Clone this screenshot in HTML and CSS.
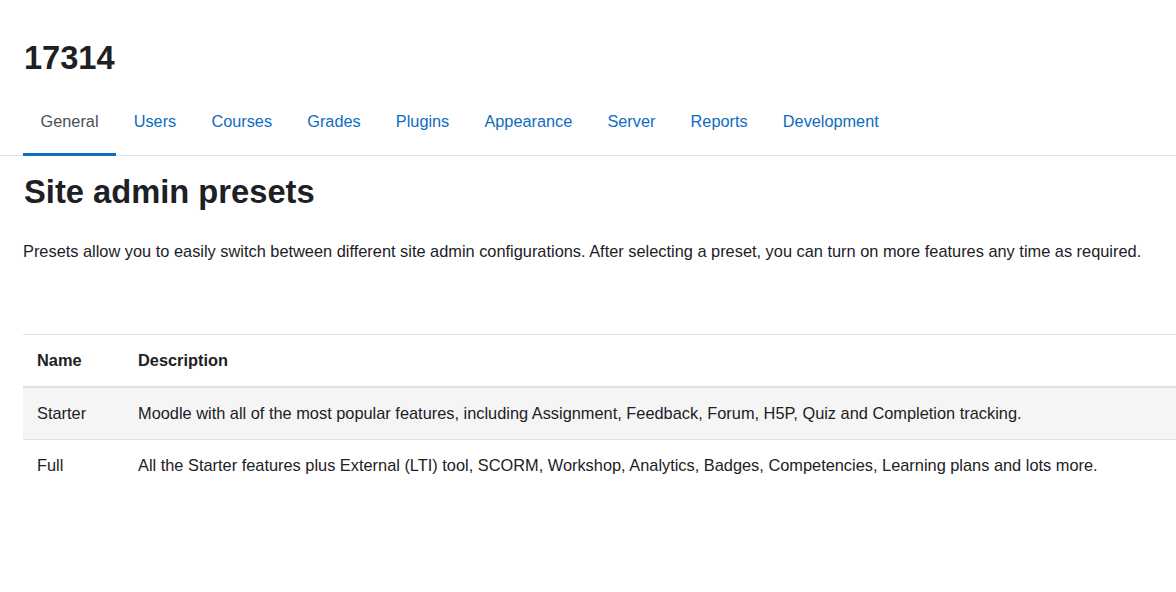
FILE: index.html
```html
<!DOCTYPE html>
<html lang="en">
<head>
    <meta charset="UTF-8">
    <meta name="viewport" content="width=device-width, initial-scale=1.0">
    <title>Site admin presets</title>
    <link rel="stylesheet" href="styles.css">
</head>
<body>
    <div class="page-header">
        <h1 class="site-title">17314</h1>
    </div>
    <nav class="tabs">
        <a class="tab active" href="#">General</a>
        <a class="tab" href="#">Users</a>
        <a class="tab" href="#">Courses</a>
        <a class="tab" href="#">Grades</a>
        <a class="tab" href="#">Plugins</a>
        <a class="tab" href="#">Appearance</a>
        <a class="tab" href="#">Server</a>
        <a class="tab" href="#">Reports</a>
        <a class="tab" href="#">Development</a>
    </nav>
    <div class="content">
        <h2 class="page-title">Site admin presets</h2>
        <p class="intro">Presets allow you to easily switch between different site admin configurations. After selecting a preset, you can turn on more features any time as required.</p>
        <table class="presets">
            <thead>
                <tr>
                    <th class="col-name">Name</th>
                    <th>Description</th>
                </tr>
            </thead>
            <tbody>
                <tr class="striped">
                    <td>Starter</td>
                    <td>Moodle with all of the most popular features, including Assignment, Feedback, Forum, H5P, Quiz and Completion tracking.</td>
                </tr>
                <tr>
                    <td>Full</td>
                    <td>All the Starter features plus External (LTI) tool, SCORM, Workshop, Analytics, Badges, Competencies, Learning plans and lots more.</td>
                </tr>
            </tbody>
        </table>
    </div>
</body>
</html>
```

FILE: styles.css
```css
body {
    margin: 0;
    font-family: "Liberation Sans", Arial, sans-serif;
    font-size: 16.37px;
    color: #1d2125;
    background: #fff;
}

.page-header {
    padding: 38px 0 0 24px;
}

.site-title {
    margin: 0;
    font-size: 32.6px;
    line-height: 40px;
    font-weight: bold;
}

.tabs {
    display: flex;
    margin-top: 25px;
    padding-left: 23px;
    border-bottom: 1px solid #dee2e6;
}

.tab {
    display: block;
    padding: 0 17.6px;
    height: 53px;
    line-height: 36px;
    font-size: 16.3px;
    color: #0f6cbf;
    text-decoration: none;
    margin-bottom: -1px;
    border-bottom: 3px solid transparent;
    box-sizing: border-box;
}

.tab.active {
    color: #495057;
    border-bottom-color: #0f6cbf;
}

.content {
    padding-left: 23px;
}

.page-title {
    margin: 16px 0 0 1px;
    font-size: 32.7px;
    line-height: 40px;
    font-weight: bold;
}

.intro {
    margin: 27px 0 0;
    line-height: 24px;
}

.presets {
    width: 100%;
    margin-top: 71px;
    border-collapse: collapse;
}

.presets th,
.presets td {
    text-align: left;
    padding: 0 14px;
    height: 51px;
    border-top: 1px solid #dee2e6;
}

.presets th {
    font-weight: bold;
    border-bottom: 2px solid #dee2e6;
}

.presets .col-name {
    width: 73px;
}

.presets tr.striped td {
    background: #f5f5f5;
}
```
